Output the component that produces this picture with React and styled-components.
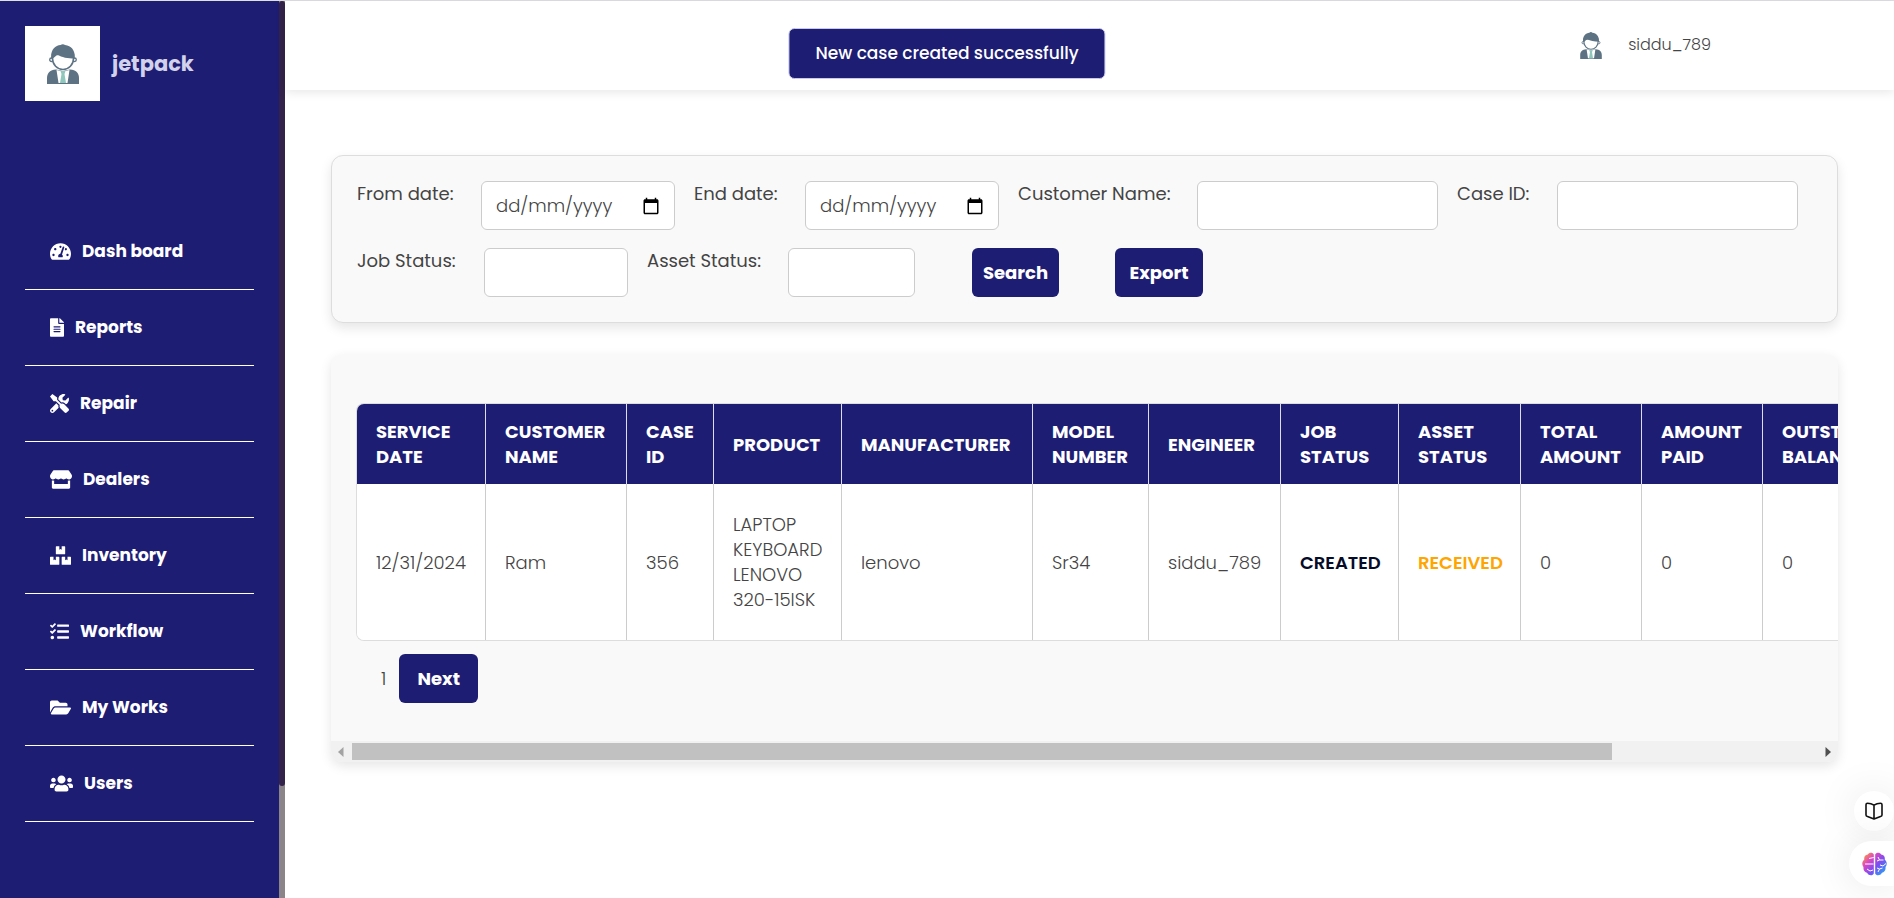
import { useState } from "react"
import styled, { createGlobalStyle, ThemeProvider } from "styled-components"
import {
  FaBoxes,
  FaFileAlt,
  FaFolderOpen,
  FaStore,
  FaTachometerAlt,
  FaTasks,
  FaTools,
  FaUsers,
} from "react-icons/fa"

const theme = {
  navy: "#1e1d74",
  panel: "#f9f9f9",
  line: "#cccccc",
  text: "#444444",
  orange: "#ffa500",
}

const GlobalStyle = createGlobalStyle`
  * {
    box-sizing: border-box;
  }
  body {
    margin: 0;
    background-color: white;
    color: ${(props) => props.theme.text};
    font-family: Poppins, Inter, "Open Sans", sans-serif;
    font-size: 18px;
    line-height: 25px;
    overflow: hidden;
  }
  button,
  input {
    font: inherit;
    color: inherit;
  }
`

const Layout = styled.div`
  display: flex;
  height: 100vh;
  border-top: 1px solid #dfdfe6;
`

const Sidebar = styled.aside`
  display: flex;
  flex: 0 0 285px;
  background-color: ${(props) => props.theme.navy};
`

const SideBody = styled.div`
  flex: 1;
  padding: 25px;
`

const SideScroll = styled.div`
  width: 6px;
  background-color: #8b8589;
`

const SideThumb = styled.div`
  height: calc(100% * 7 / 8);
  border-radius: 3px;
  background-color: #33234a;
`

const Brand = styled.div`
  display: flex;
  align-items: center;
  gap: 12px;
  margin-bottom: 113px;
  font-size: 21px;
  font-weight: 700;
  color: #d2d2ea;
`

const LogoBox = styled.div`
  display: flex;
  justify-content: center;
  align-items: center;
  width: 75px;
  height: 75px;
  background-color: white;
`

const Menu = styled.ul`
  list-style: none;
  margin: 0;
  padding: 0;
`

const MenuItem = styled.li`
  border-bottom: 1px solid white;
`

const MenuLink = styled.a`
  display: flex;
  align-items: center;
  gap: 11px;
  height: 75px;
  padding-left: 25px;
  color: white;
  font-size: 17px;
  font-weight: 700;
  text-decoration: none;

  svg {
    width: ${(props) => props.$iconWidth}px;
    height: 19px;
  }
`

const Main = styled.main`
  flex: 1;
  min-width: 0;
`

const Header = styled.header`
  display: flex;
  justify-content: flex-end;
  height: 89px;
  padding: 31px 183px 0 0;
  box-shadow: 0 2px 10px rgb(0 0 0 / 10%);
`

const UserInfo = styled.div`
  display: flex;
  align-items: flex-start;
  gap: 26px;
  height: 28px;
  font-size: 16px;
  font-weight: 300;
`

const Toast = styled.div`
  position: absolute;
  z-index: 10;
  top: 28px;
  left: 50%;
  transform: translateX(-50%);
  padding: 12px 26px;
  border: 1px solid #c9c9ee;
  border-radius: 6px;
  background-color: ${(props) => props.theme.navy};
  color: white;
  font-size: 17px;
  font-weight: 500;
  white-space: nowrap;
`

const Content = styled.div`
  display: flex;
  flex-direction: column;
  gap: 31px;
  padding: 65px 56px 0 46px;
`

const Filters = styled.form`
  display: flex;
  flex-direction: column;
  gap: 18px;
  padding: 25px;
  border: 1px solid #dddddd;
  border-radius: 12px;
  background-color: ${(props) => props.theme.panel};
  box-shadow: 0 5px 12px rgb(0 0 0 / 10%);
`

const FilterRow = styled.div`
  display: flex;
  flex-wrap: wrap;
  gap: 19px;
`

const Field = styled.div`
  display: flex;
`

const Label = styled.label`
  width: ${(props) => props.$width}px;
  white-space: nowrap;
`

const InputBox = styled.div`
  display: flex;
  align-items: center;
  width: ${(props) => props.$width}px;
  height: 49px;
  padding: 0 14px;
  border: 1px solid ${(props) => props.theme.line};
  border-radius: 6px;
  background-color: white;
`

const Input = styled.input`
  flex: 1;
  min-width: 0;
  padding: 0;
  border: none;
  outline: none;
  background: none;
  font-weight: 300;

  &::placeholder {
    color: ${(props) => props.theme.text};
    opacity: 1;
  }
`

const CalendarButton = styled.button`
  display: flex;
  padding: 0;
  border: none;
  background: none;
  color: black;
  cursor: pointer;
`

const Actions = styled.div`
  display: flex;
  gap: 56px;
  margin-left: 38px;
`

const Button = styled.button`
  cursor: pointer;
  min-width: ${(props) => props.$width}px;
  height: 49px;
  padding: 0;
  border: none;
  border-radius: 6px;
  background-color: ${(props) => props.theme.navy};
  color: white;
  font-weight: 700;
`

const TableCard = styled.section`
  overflow: hidden;
  border-radius: 12px;
  background-color: ${(props) => props.theme.panel};
  box-shadow: 0 4px 12px rgb(0 0 0 / 10%);
`

const TableScroll = styled.div`
  overflow-x: auto;
  scrollbar-width: none;
  padding: 49px 0 38px 25px;
`

const Table = styled.table`
  table-layout: fixed;
  width: 1578px;
  border-collapse: separate;
  border-spacing: 0;
  border: 1px solid #dddddd;
  border-right: none;
  border-radius: 8px;
  overflow: hidden;
`

const Th = styled.th`
  height: 80px;
  padding: 0 17px 0 19px;
  border-right: 1px solid #dcdcf0;
  background-color: ${(props) => props.theme.navy};
  color: white;
  font-weight: 700;
  text-align: left;
`

const Td = styled.td`
  height: 156px;
  padding: 0 17px 0 19px;
  border-right: 1px solid ${(props) => props.theme.line};
  background-color: white;
  color: ${(props) => props.$color || props.theme.text};
  font-weight: ${(props) => (props.$color ? 600 : 300)};
`

const Pagination = styled.div`
  display: flex;
  align-items: center;
  gap: 13px;
  padding: 13px 0 0 25px;
  font-weight: 300;
`

const ScrollBar = styled.div`
  display: flex;
  align-items: center;
  height: 21px;
  padding: 0 7px;
  background-color: #f1f1f1;
`

const ScrollTrack = styled.div`
  flex: 1;
  margin: 0 8px;
`

const ScrollThumb = styled.div`
  width: 86%;
  height: 17px;
  background-color: #c1c1c1;
`

const Floating = styled.div`
  position: fixed;
  z-index: 10;
  right: 0;
  bottom: 12px;
  display: flex;
  flex-direction: column;
  align-items: flex-end;
  gap: 10px;
`

const RoundButton = styled.button`
  display: flex;
  justify-content: center;
  align-items: center;
  width: 40px;
  height: 40px;
  padding: 0;
  border: none;
  border-radius: 20px;
  background-color: white;
  box-shadow: 0 0 40px rgb(0 0 0 / 10%);
  cursor: pointer;
`

const PillButton = styled(RoundButton)`
  width: 45px;
  height: 45px;
  padding-left: 6px;
  border-radius: 23px 0 0 23px;
`

const menus = [
  { name: "Dash board", Icon: FaTachometerAlt, width: 21 },
  { name: "Reports", Icon: FaFileAlt, width: 14 },
  { name: "Repair", Icon: FaTools, width: 19 },
  { name: "Dealers", Icon: FaStore, width: 22 },
  { name: "Inventory", Icon: FaBoxes, width: 21 },
  { name: "Workflow", Icon: FaTasks, width: 19 },
  { name: "My Works", Icon: FaFolderOpen, width: 21 },
  { name: "Users", Icon: FaUsers, width: 23 },
]

const columns = [
  { title: "SERVICE DATE", width: 129, value: "12/31/2024" },
  { title: "CUSTOMER NAME", width: 141, value: "Ram" },
  { title: "CASE ID", width: 87, value: "356" },
  { title: "PRODUCT", width: 128, value: "LAPTOP KEYBOARD LENOVO 320-15ISK" },
  { title: "MANUFACTURER", width: 191, value: "lenovo" },
  { title: "MODEL NUMBER", width: 116, value: "Sr34" },
  { title: "ENGINEER", width: 132, value: "siddu_789" },
  { title: "JOB STATUS", width: 118, value: "CREATED", color: "#050c28" },
  { title: "ASSET STATUS", width: 122, value: "RECEIVED", color: theme.orange },
  { title: "TOTAL AMOUNT", width: 121, value: "0" },
  { title: "AMOUNT PAID", width: 121, value: "0" },
  { title: "OUTSTANDING BALANCE", width: 171, value: "0" },
]

function Avatar({ width, height }) {
  return (
    <svg width={width} height={height} viewBox="0 0 32 40" aria-hidden="true">
      <circle cx="4.500" cy="15.800" r="1.800" fill="white" stroke="#5d7283" strokeWidth="1.300" />
      <circle cx="27.500" cy="15.800" r="1.800" fill="white" stroke="#5d7283" strokeWidth="1.300" />
      <path d="M5.500 14.500a10.500 11 0 0 0 21 0v-4h-21z" fill="white" stroke="#5d7283" strokeWidth="1.600" />
      <path
        d="M4.200 14C3.500 6 8 1.500 13.500 1C15 -.2 17 0 18 1C25 2 28.500 7 27.600 14.500C21 14.500 14.500 13.500 10.500 10.500C9 12 7 13.200 5.500 15z"
        fill="#5d7283"
      />
      <path d="M0 40v-6c0-5 3-8 9-8.500L16 27l7-1.500c6 .5 9 3.500 9 8.500v6z" fill="#5d7283" />
      <path d="M9.500 26L16 27.500l6.500-1.500L20.500 39h-9z" fill="white" />
      <path d="M13.500 27h5l-1 3 1.500 9h-6l1.500-9z" fill="#8fc7bd" />
    </svg>
  )
}

function CalendarIcon() {
  return (
    <svg width="18" height="18" viewBox="0 0 24 24" fill="currentColor">
      <path d="M20 3h-1V1h-2v2H7V1H5v2H4c-1.100 0-2 .9-2 2v16c0 1.100.9 2 2 2h16c1.100 0 2-.9 2-2V5c0-1.100-.9-2-2-2zm0 18H4V8h16v13z" />
    </svg>
  )
}

function BookIcon() {
  return (
    <svg width="18" height="18" viewBox="0 0 18 18" fill="none" stroke="#111" strokeWidth="1.600" strokeLinejoin="round">
      <path d="M9 3.200C7 1.800 4 1.200 2.500 1.200Q1 1.200 1 2.800V13q0 1.300 1.500 1.500L9 17l6.500-2.500Q17 14.300 17 13V2.800Q17 1.200 15.500 1.200C14 1.200 11 1.800 9 3.200zV17" />
    </svg>
  )
}

function BrainIcon() {
  return (
    <svg width="25" height="24" viewBox="0 0 25 24">
      <defs>
        <linearGradient id="brain" gradientUnits="userSpaceOnUse" x1="2" y1="2" x2="23" y2="22">
          <stop offset="0" stopColor="#ff9a3d" />
          <stop offset=".3" stopColor="#d946c4" />
          <stop offset=".6" stopColor="#7c4df2" />
          <stop offset="1" stopColor="#22a7f5" />
        </linearGradient>
      </defs>
      <path
        d="M11.800 2.500C11 .2 7 0 5.800 2.500C3 2.800 1.800 5 2.300 7.500C-.2 9.500-.3 13 1.500 15C1 18.500 3 20.500 5 20.800C6.500 24 11 24 11.800 21.500z"
        fill="url(#brain)"
      />
      <path
        d="M13.200 2.500C14 .2 18 0 19.200 2.500C22 2.800 23.200 5 22.700 7.500C25.200 9.500 25.300 13 23.500 15C24 18.500 22 20.500 20 20.800C18.500 24 14 24 13.200 21.500z"
        fill="url(#brain)"
      />
      <path
        d="M11.800 5.500L7 6.500M3 12h8.500M5 17l3 2 3-1M16 5l1.500 3h4M17.500 8L15 9M18 13l3 1 3-2.500M16 20l1.500-3 3-1M17.500 17L15 16"
        fill="none"
        stroke="white"
        strokeWidth="1"
      />
    </svg>
  )
}

function DateField({ id, label, labelWidth, boxWidth }) {
  return (
    <Field>
      <Label htmlFor={id} $width={labelWidth}>
        {label}
      </Label>
      <InputBox $width={boxWidth}>
        <Input id={id} placeholder="dd/mm/yyyy" />
        <CalendarButton type="button" aria-label="Open calendar">
          <CalendarIcon />
        </CalendarButton>
      </InputBox>
    </Field>
  )
}

function TextField({ id, label, labelWidth, boxWidth }) {
  return (
    <Field>
      <Label htmlFor={id} $width={labelWidth}>
        {label}
      </Label>
      <InputBox $width={boxWidth}>
        <Input id={id} />
      </InputBox>
    </Field>
  )
}

function App() {
  const [page, setPage] = useState(1)

  return (
    <ThemeProvider theme={theme}>
      <GlobalStyle />
      <Layout>
        <Sidebar>
          <SideBody>
            <Brand>
              <LogoBox>
                <Avatar width={32} height={40} />
              </LogoBox>
              jetpack
            </Brand>
            <Menu>
              {menus.map(({ name, Icon, width }) => (
                <MenuItem key={name}>
                  <MenuLink href="#" $iconWidth={width}>
                    <Icon />
                    {name}
                  </MenuLink>
                </MenuItem>
              ))}
            </Menu>
          </SideBody>
          <SideScroll>
            <SideThumb />
          </SideScroll>
        </Sidebar>
        <Main>
          <Header>
            <UserInfo>
              <Avatar width={22} height={27} />
              siddu_789
            </UserInfo>
          </Header>
          <Toast role="status">New case created successfully</Toast>
          <Content>
            <Filters onSubmit={(e) => e.preventDefault()}>
              <FilterRow>
                <DateField id="from" label="From date:" labelWidth={124} boxWidth={194} />
                <DateField id="end" label="End date:" labelWidth={111} boxWidth={194} />
                <TextField id="customer" label="Customer Name:" labelWidth={179} boxWidth={241} />
                <TextField id="case" label="Case ID:" labelWidth={100} boxWidth={241} />
              </FilterRow>
              <FilterRow>
                <TextField id="job" label="Job Status:" labelWidth={127} boxWidth={144} />
                <TextField id="asset" label="Asset Status:" labelWidth={141} boxWidth={127} />
                <Actions>
                  <Button $width={87}>Search</Button>
                  <Button type="button" $width={88}>
                    Export
                  </Button>
                </Actions>
              </FilterRow>
            </Filters>
            <TableCard>
              <TableScroll>
                <Table>
                  <colgroup>
                    {columns.map((col) => (
                      <col key={col.title} width={col.width} />
                    ))}
                  </colgroup>
                  <thead>
                    <tr>
                      {columns.map((col) => (
                        <Th key={col.title}>{col.title}</Th>
                      ))}
                    </tr>
                  </thead>
                  <tbody>
                    <tr>
                      {columns.map((col) => (
                        <Td key={col.title} $color={col.color}>
                          {col.value}
                        </Td>
                      ))}
                    </tr>
                  </tbody>
                </Table>
                <Pagination>
                  {page}
                  <Button $width={79} onClick={() => setPage(page + 1)}>
                    Next
                  </Button>
                </Pagination>
              </TableScroll>
              <ScrollBar>
                <svg width="6" height="10" viewBox="0 0 6 10">
                  <path d="M5.500 0v10L0 5z" fill="#a3a3a3" />
                </svg>
                <ScrollTrack>
                  <ScrollThumb />
                </ScrollTrack>
                <svg width="6" height="10" viewBox="0 0 6 10">
                  <path d="M.5 0v10L6 5z" fill="#505050" />
                </svg>
              </ScrollBar>
            </TableCard>
          </Content>
        </Main>
      </Layout>
      <Floating>
        <RoundButton aria-label="Read">
          <BookIcon />
        </RoundButton>
        <PillButton aria-label="Assistant">
          <BrainIcon />
        </PillButton>
      </Floating>
    </ThemeProvider>
  )
}

export default App
